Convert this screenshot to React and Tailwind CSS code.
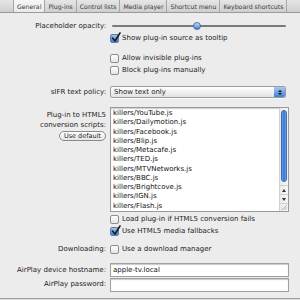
import React from "react";

const tabs = ["General", "Plug-ins", "Control lists", "Media player", "Shortcut menu", "Keyboard shortcuts"];

const scripts = [
  "killers/YouTube.js",
  "killers/Dailymotion.js",
  "killers/Facebook.js",
  "killers/Blip.js",
  "killers/Metacafe.js",
  "killers/TED.js",
  "killers/MTVNetworks.js",
  "killers/BBC.js",
  "killers/Brightcove.js",
  "killers/IGN.js",
  "killers/Flash.js",
];

const Check = ({ checked, label }) => (
  <div className="flex items-center gap-[3px] h-[11px]">
    {checked ? (
      <span className="w-[9px] h-[9px] rounded-[2px] border border-[#5b7fb0] bg-gradient-to-b from-[#9fc3ee] to-[#3f7fd6] relative">
        <svg className="absolute -top-[3px] left-[0px]" width="10" height="11" viewBox="0 0 10 11">
          <path d="M1.5 6 L4 9 L9 1" fill="none" stroke="#1b1b1b" strokeWidth="1.6" strokeLinecap="round" strokeLinejoin="round" />
        </svg>
      </span>
    ) : (
      <span className="w-[9px] h-[9px] rounded-[2px] border border-[#8d8d8d] bg-gradient-to-b from-[#ffffff] to-[#e4e4e4]" />
    )}
    <span>{label}</span>
  </div>
);

const Label = ({ children, className = "" }) => (
  <div className={`text-right pr-[4px] ${className}`}>{children}</div>
);

export default function App() {
  return (
    <div
      className="w-[300px] h-[300px] bg-[#ececec] text-[#222] text-[7px] leading-[9px] overflow-hidden flex flex-col"
      style={{ fontFamily: '"DejaVu Sans", sans-serif' }}
    >
      {/* tab bar */}
      <div className="flex h-[13px] border-b border-[#9a9a9a] bg-gradient-to-b from-[#e6e6e6] to-[#cfcfcf] text-[#3a3a3a] text-[6.2px]">
        <div className="w-[14px] border-r border-[#a6a6a6]" />
        {tabs.map((t, i) => (
          <div
            key={t}
            className={`px-[3px] flex items-center border-r border-[#a6a6a6] whitespace-nowrap ${
              i === 0 ? "bg-gradient-to-b from-[#f7f7f7] to-[#e9e9e9]" : ""
            }`}
          >
            {t}
          </div>
        ))}
        <div className="flex-1" />
      </div>

      <div className="grid grid-cols-[110px_1fr] content-start pr-[14px]">
        {/* slider */}
        <Label className="pt-[9px]">Placeholder opacity:</Label>
        <div className="h-[20px] relative">
          <div className="absolute left-[2px] right-0 top-[12px] h-[2px] bg-[#7a7a7a] rounded" />
          <div className="absolute left-[83px] top-[9px] w-[8px] h-[8px] rounded-full border border-[#4a6d9e] bg-gradient-to-b from-[#c7ddf6] to-[#3d7fd8]" />
        </div>

        <div />
        <div>
          <Check checked label="Show plug-in source as tooltip" />
        </div>

        <div />
        <div className="pt-[9px] flex flex-col gap-[1px]">
          <Check label="Allow invisible plug-ins" />
          <Check label="Block plug-ins manually" />
        </div>

        {/* select */}
        <Label className="pt-[12px]">sIFR text policy:</Label>
        <div className="pt-[10px]">
          <div className="h-[12px] flex items-stretch border border-[#9c9c9c] rounded-[2px] bg-gradient-to-b from-[#ffffff] to-[#e2e2e2] shadow-[0_1px_0_#f8f8f8]">
            <div className="flex-1 flex items-center pl-[3px]">Show text only</div>
            <div className="w-[11px] rounded-r-[2px] bg-gradient-to-b from-[#a7c9f1] to-[#3d7fd8] flex flex-col items-center justify-center gap-[1px]">
              <span className="w-0 h-0 border-l-[2px] border-r-[2px] border-b-[2px] border-l-transparent border-r-transparent border-b-[#111]" />
              <span className="w-0 h-0 border-l-[2px] border-r-[2px] border-t-[2px] border-l-transparent border-r-transparent border-t-[#111]" />
            </div>
          </div>
        </div>

        {/* scripts */}
        <div className="pt-[12px] flex flex-col items-end pr-[4px]">
          <div className="text-right leading-[10px]">
            Plug-in to HTML5
            <br />
            conversion scripts:
          </div>
          <button className="mt-[1px] h-[10px] px-[4px] rounded-full border border-[#8a8a8a] bg-gradient-to-b from-[#ffffff] to-[#e6e6e6] text-[6.5px] leading-[8px]">
            Use default
          </button>
        </div>
        <div className="pt-[9px] -mr-[3px]">
          <div className="h-[105px] flex border border-[#9a9a9a] bg-white shadow-[inset_0_1px_1px_#ccc]">
            <div className="flex-1 pl-[2px] pt-[1px] leading-[9.25px] text-[#111]">
              {scripts.map((s) => (
                <div key={s}>{s}</div>
              ))}
            </div>
            <div className="w-[9px] border-l border-[#d0d0d0] bg-gradient-to-r from-[#e9e9e9] to-[#f7f7f7] flex flex-col">
              <div className="mx-[1px] mt-[2px] h-[72px] rounded-full bg-gradient-to-r from-[#6ea2e8] via-[#2f74d6] to-[#6ea2e8] border border-[#3c6cb2]" />
              <div className="flex-1" />
              <div className="h-[9px] flex items-center justify-center border-t border-[#cfcfcf]">
                <span className="w-0 h-0 border-l-[2.5px] border-r-[2.5px] border-b-[3px] border-l-transparent border-r-transparent border-b-[#333]" />
              </div>
              <div className="h-[9px] flex items-center justify-center border-t border-[#cfcfcf]">
                <span className="w-0 h-0 border-l-[2.5px] border-r-[2.5px] border-t-[3px] border-l-transparent border-r-transparent border-t-[#333]" />
              </div>
              <div className="h-[8px] border-t border-[#cfcfcf] flex items-end justify-end">
                <svg width="7" height="7" viewBox="0 0 7 7">
                  <path d="M6 1 L1 6 M6 3.5 L3.5 6" stroke="#999" strokeWidth="0.8" />
                </svg>
              </div>
            </div>
          </div>
        </div>

        <div />
        <div className="pt-[2px] flex flex-col gap-[1px]">
          <Check label="Load plug-in if HTML5 conversion fails" />
          <Check checked label="Use HTML5 media fallbacks" />
        </div>

        {/* downloading */}
        <Label className="pt-[8px]">Downloading:</Label>
        <div className="pt-[7px]">
          <Check label="Use a download manager" />
        </div>

        {/* airplay */}
        <Label className="pt-[11px]">AirPlay device hostname:</Label>
        <div className="pt-[8px] -mr-[3px]">
          <div className="h-[14px] border border-[#a0a0a0] bg-white shadow-[inset_0_1px_1px_#c8c8c8] pl-[2px] flex items-center text-[#111]">
            apple-tv.local
          </div>
        </div>

        <Label className="pt-[3px]">AirPlay password:</Label>
        <div className="pt-[1px] -mr-[3px]">
          <div className="h-[14px] border border-[#a0a0a0] bg-white shadow-[inset_0_1px_1px_#c8c8c8]" />
        </div>
      </div>
      <div className="flex-1" />
      <div className="h-[2px] border-t border-[#a0a0a0] bg-[#dcdcdc]" />
    </div>
  );
}
